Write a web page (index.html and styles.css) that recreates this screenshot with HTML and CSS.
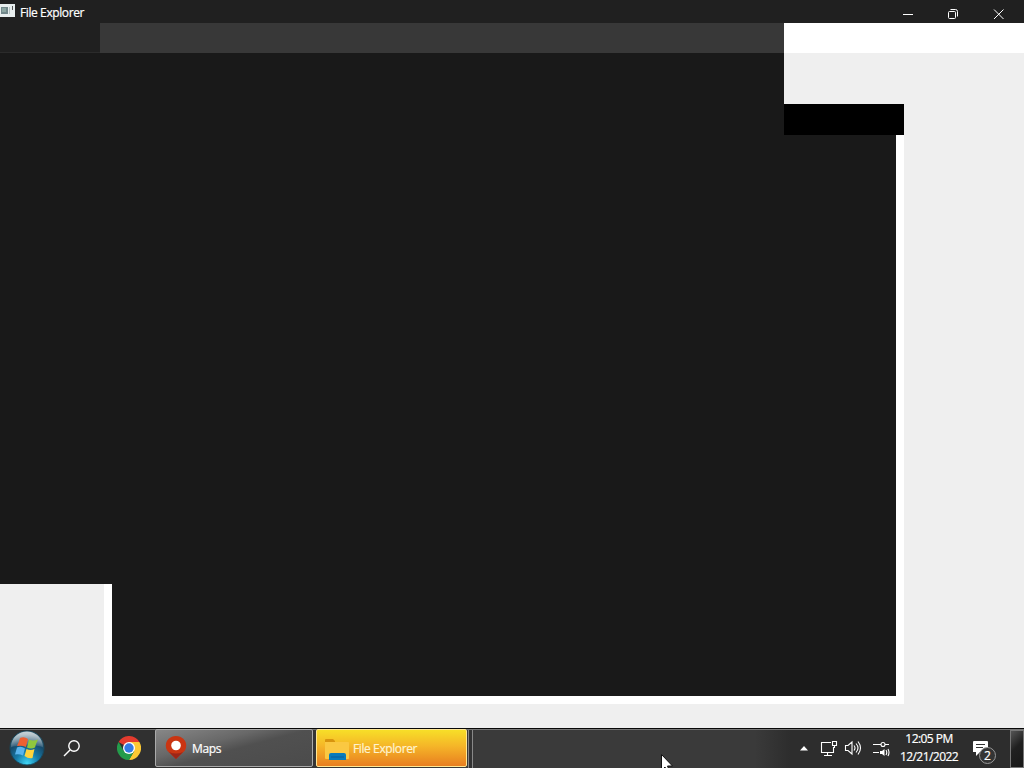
FILE: index.html
```html
<!DOCTYPE html>
<html lang="en">
<head>
  <meta charset="UTF-8" />
  <meta name="viewport" content="width=device-width, initial-scale=1.0"/>
  <title>File Explorer</title>
  <link rel="stylesheet" href="styles.css">
</head>
<body>
  <header class="titlebar">
    <svg class="app-icon" width="16" height="14" viewBox="0 0 16 14">
      <path fill="#e8eeee" d="M0 0h15v13H0z"/>
      <path fill="#71878a" d="M1 3h7v7H1z"/>
      <path fill="#8ca6a2" d="M2 4h4v4H2z"/>
      <path fill="#555" d="M12 2h1v4h-1z"/>
      <path fill="#b7c5c5" d="M9 3h1v7H9z"/>
    </svg>
    <span class="title">File Explorer</span>
    <div class="window-buttons">
      <svg width="46" height="23" viewBox="0 0 46 23"><path d="M18 14.5h10"/></svg>
      <svg width="45" height="23" viewBox="0 0 45 23"><rect x="17.5" y="11.5" width="7" height="7" rx="1"/><path d="M19.500 9.500h5a2 2 0 0 1 2 2v5"/></svg>
      <svg width="46" height="23" viewBox="0 0 46 23"><path d="M18 9.500l9.500 9.500M27.500 9.500L18 19"/></svg>
    </div>
  </header>

  <div class="toolbar">
    <div class="tab"></div>
    <div class="address"></div>
    <div class="blank"></div>
  </div>

  <main class="content">
    <div class="pane pane-top"></div>
    <div class="strip"></div>
    <div class="pane pane-left"></div>
    <div class="frame"></div>
    <div class="pane pane-main"></div>
  </main>

  <footer class="taskbar">
    <svg class="start" width="36" height="37" viewBox="0 0 36 37">
      <defs>
        <radialGradient id="orb" cx=".5" cy=".95" r=".85">
          <stop offset="0" stop-color="#40d6f5"/>
          <stop offset=".4" stop-color="#167ba9"/>
          <stop offset=".75" stop-color="#174a6b"/>
          <stop offset="1" stop-color="#658493"/>
        </radialGradient>
        <linearGradient id="gloss" x1="0" y1="0" x2="0" y2="1">
          <stop offset="0" stop-color="#fff" stop-opacity=".65"/>
          <stop offset="1" stop-color="#fff" stop-opacity=".12"/>
        </linearGradient>
      </defs>
      <circle cx="18" cy="18" r="17" fill="url(#orb)" stroke="#17475c"/>
      <path d="M2 17C3-3 32-4 34 17Q18 12 2 17z" fill="url(#gloss)"/>
      <path d="M11 8q4-2 8 1l-2 8q-4-2-9-1 2-4 3-8z" fill="#ed6032"/>
      <path d="M20 9.500q4 2 9 0-2 4-3 8-4 2-8 0z" fill="#8fc83d"/>
      <path d="M8 17.500q4-2 8 1l-2 7q-4-2-8-1z" fill="#5ab4ed"/>
      <path d="M17.500 19q4 2 8 0-1 4-2 9-4 1-8-2z" fill="#ffd33c"/>
    </svg>
    <svg class="search" width="20" height="20" viewBox="0 0 20 20"><circle cx="12" cy="7" r="5.200"/><path d="M8 11l-6 6"/></svg>
    <svg class="chrome" width="24" height="24" viewBox="0 0 24 24">
      <path fill="#e33b2e" d="M12 12L1.600 6A12 12 0 0 1 22.400 6z"/>
      <path fill="#fcc934" d="M12 12V6h10.400A12 12 0 0 1 12 24l5.200-9z"/>
      <path fill="#249b4b" d="M12 12l5.200 3L12 24A12 12 0 0 1 1.600 6l5.200 9z"/>
      <circle cx="12" cy="12" r="6" fill="#fff"/>
      <circle cx="12" cy="12" r="4.700" fill="#347be5"/>
    </svg>

    <div class="task task-maps">
      <svg width="22" height="26" viewBox="0 0 22 26">
        <path d="M11 24L2.500 16C-2 9 3 1 11 1s13 8 8.500 15z" fill="#ca3512"/>
        <path d="M11 24L4 17q7 3 14 0z" fill="#9b2618"/>
        <circle cx="11" cy="10.500" r="4.800" fill="#fff"/>
      </svg>
      <span>Maps</span>
    </div>
    <div class="task task-explorer">
      <svg width="24" height="22" viewBox="0 0 24 22">
        <path d="M0 2q0-1 1-1h7l2 2v4H0z" fill="#d8940e"/>
        <path d="M0 4h23q1 0 1 1v15q0 1-1 1H1q-1 0-1-1z" fill="#fac842"/>
        <path d="M4 22v-5q0-2 2-2h13q2 0 2 2v5z" fill="#087bbb"/>
        <path d="M6 19h13" stroke="#075f9d"/>
      </svg>
      <span>File Explorer</span>
    </div>
    <div class="task-edge"></div>

    <div class="tray">
      <svg class="arrow" width="8" height="5" viewBox="0 0 8 5"><path d="M4 0l4 4.500H0z"/></svg>
      <svg class="line-icon network" width="18" height="17" viewBox="0 0 18 17"><path d="M11 2.500H1.500v10h12V7M7.500 12.500v3M4 15.500h8M12.500 1.500h4v4h-4zM14.500 5.500V8"/></svg>
      <svg class="line-icon volume" width="18" height="16" viewBox="0 0 18 16"><path d="M1.500 5.500H4l4-3.500v12l-4-3.500H1.500zM10 5.500q2 2.500 0 5M12 3.500q4 4.500 0 9M14 1.500q5 6.500 0 13"/></svg>
      <svg class="line-icon mixer" width="18" height="18" viewBox="0 0 18 18"><path d="M1 4.500h8M13 4.500h4M1 12.500h6M14 10q1.500 2.500 0 5M16 9q2 3.500 0 7"/><circle cx="11" cy="4.500" r="2"/><path class="solid" d="M8 11h2l2.500-2v7L10 14H8z"/></svg>
      <div class="clock">
        <span class="time">12:05 PM</span>
        <span class="date">12/21/2022</span>
      </div>
      <div class="notice">
        <svg width="16" height="16" viewBox="0 0 16 16"><path d="M1 0h13q1 0 1 1v10H7l-4 4v-4H0V1q0-1 1-1z" fill="#fff"/><path d="M3 3.500h9M3 6.500h7" stroke="#333"/></svg>
        <span class="badge">2</span>
      </div>
    </div>
    <div class="show-desktop"></div>
  </footer>

  <svg class="cursor" width="12" height="18" viewBox="0 0 12 18"><path d="M.5.500v16l3.500-3.500 2 5 2.500-1-2-5h5z"/></svg>
</body>
</html>
```
FILE: styles.css
```css
* { box-sizing: border-box; }
body {
  margin: 0;
  width: 1024px;
  height: 768px;
  overflow: hidden;
  display: flex;
  flex-direction: column;
  background: #efefef;
  color: #fff;
  font-family: "Open Sans", "Noto Sans", sans-serif;
  font-size: 12px;
  -webkit-text-stroke: 0.2px;
}
svg { display: block; flex: none; }

.titlebar {
  display: flex;
  height: 23px;
  background: #202020;
}
.app-icon { margin-top: 4px; }
.title {
  margin-left: 4px;
  line-height: 25px;
  letter-spacing: -0.4px;
}
.window-buttons {
  display: flex;
  margin-left: auto;
  margin-right: 2px;
  fill: none;
  stroke: #fff;
}

.toolbar {
  display: flex;
  height: 30px;
}
.tab {
  width: 100px;
  background: #202020;
  border-bottom: 1px solid #2b2b2b;
}
.address { width: 684px; background: #383838; }
.blank { flex: 1; background: #fff; }

/* window surface and the offset frame behind it */
.content {
  display: grid;
  height: 675px;
  grid-template-columns: 104px 8px 672px 112px 8px 120px;
  grid-template-rows: 51px 31px 449px 112px 8px 24px;
}
.pane { background: #191919; }
.pane-top { grid-area: 1 / 1 / 3 / 4; }
.strip { grid-area: 2 / 4 / 3 / 6; background: #000; }
.frame { grid-area: 3 / 2 / 6 / 6; background: #fff; }
.pane-left { grid-area: 3 / 1 / 4 / 3; z-index: 1; }
.pane-main { grid-area: 3 / 3 / 5 / 5; }

.taskbar {
  display: flex;
  height: 40px;
  padding-top: 1px;
  background: linear-gradient(90deg, #303030 0, #303030 150px, #3a3a3a 480px, #3a3a3a 755px, #2d2d2d 790px);
  border-top: 1px solid #080808;
  box-shadow: inset 0 1px #777;
}
.start { margin-left: 9px; }
.search {
  margin: 9px 0 0 17px;
  fill: none;
  stroke: #fff;
  stroke-width: 1.4;
}
.chrome { margin: 6px 0 0 35px; }

.task {
  display: flex;
  align-items: center;
  height: 38px;
  margin-top: -1px;
  border: 1px solid #aaa;
  border-radius: 2px;
}
.task-maps {
  width: 158px;
  margin-left: 14px;
  padding-left: 9px;
  background: linear-gradient(165deg, #878787 0, #686868 35%, #505050 52%, #4b4b4b 100%);
}
.task-maps span { margin-left: 5px; letter-spacing: -0.35px; }
.task-explorer {
  width: 151px;
  margin-left: 3px;
  padding-left: 8px;
  border-color: #ffe795;
  background: linear-gradient(#f7df28, #f5b528 45%, #e87e20);
}
.task-explorer svg { margin-top: 2px; }
.task-explorer span { margin-left: 4px; color: #fff4cf; letter-spacing: -0.4px; }
.task-edge {
  width: 5px;
  margin-left: 1px;
  border: solid #888;
  border-width: 0 1px;
  background: #333;
}

.tray { display: flex; margin-left: auto; width: 210px; }
.arrow { margin: 16px 0 0 0; fill: #fff; }
.line-icon { fill: none; stroke: #fff; stroke-width: 1.1; }
.network { margin: 10px 0 0 12px; }
.volume { margin: 10px 0 0 6px; }
.mixer { margin: 10px 0 0 10px; }
.solid { fill: #fff; stroke: none; }
.clock {
  width: 60px;
  margin-left: 9px;
  display: flex;
  flex-direction: column;
  align-items: center;
  line-height: 18px;
  letter-spacing: -0.55px;
  white-space: nowrap;
}
.notice { position: relative; margin: 11px 0 0 14px; width: 22px; }
.badge {
  position: absolute;
  left: 6px;
  top: 6px;
  width: 17px;
  height: 17px;
  border: 1px solid #999;
  border-radius: 50%;
  background: #343434;
  line-height: 15px;
  text-align: center;
}
.show-desktop {
  width: 14px;
  border: 1px solid #777;
  background: linear-gradient(135deg, #555, #202020 45%, #171717);
}

.cursor {
  position: absolute;
  left: 661px;
  top: 754px;
  fill: #fff;
  stroke: #111;
}
```
